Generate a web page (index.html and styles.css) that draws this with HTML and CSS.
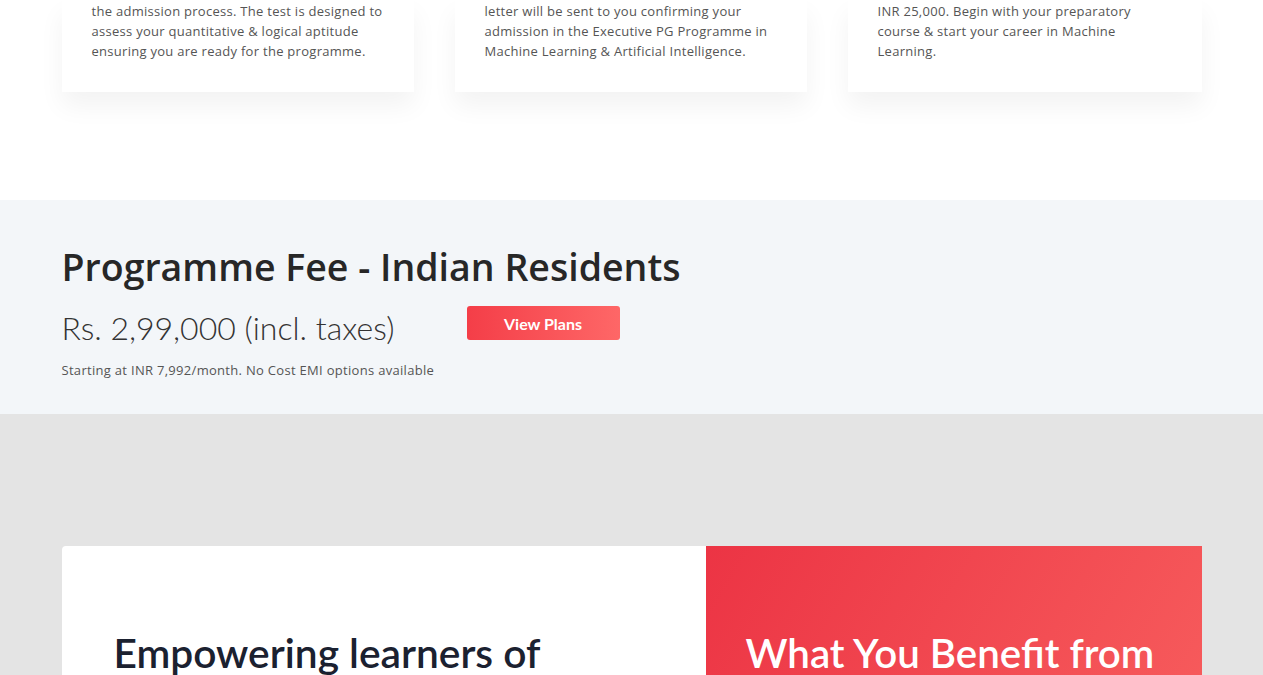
FILE: index.html
```html
<!DOCTYPE html>
<html lang="en">
<head>
<meta charset="utf-8">
<title>Programme Fee</title>
<link rel="stylesheet" href="styles.css">
</head>
<body>
<section class="steps">
  <div class="container steps-grid">
    <div class="step-card">
      <p>the admission process. The test is designed to assess your quantitative &amp; logical aptitude ensuring you are ready for the programme.</p>
    </div>
    <div class="step-card">
      <p>letter will be sent to you confirming your admission in the Executive PG Programme in Machine Learning &amp; Artificial Intelligence.</p>
    </div>
    <div class="step-card">
      <p>INR 25,000. Begin with your preparatory course &amp; start your career in Machine Learning.</p>
    </div>
  </div>
</section>

<section class="fee">
  <div class="container">
    <h2 class="fee-title">Programme Fee - Indian Residents</h2>
    <div class="fee-row">
      <div class="fee-info">
        <div class="fee-price">Rs. 2,99,000 (incl. taxes)</div>
        <div class="fee-note">Starting at INR 7,992/month. No Cost EMI options available</div>
      </div>
      <button class="btn-plans">View Plans</button>
    </div>
  </div>
</section>

<section class="benefits">
  <div class="container benefit-card">
    <div class="benefit-left">
      <h2>Empowering learners of</h2>
    </div>
    <div class="benefit-right">
      <h2>What You Benefit from</h2>
    </div>
  </div>
</section>
</body>
</html>
```

FILE: styles.css
```css
* { box-sizing: border-box; }
html, body { margin: 0; padding: 0; }
body {
  font-family: "Open Sans", "Liberation Sans", Arial, sans-serif;
  background: #ffffff;
  color: #333;
  overflow: hidden;
}
.container {
  width: 1140px;
  margin: 0 auto;
}

/* steps cards */
.steps {
  background: #fff;
  height: 200px;
}
.steps-grid {
  display: grid;
  grid-template-columns: 352px 352px 354px;
  column-gap: 41px;
}
.step-card {
  background: #fff;
  height: 92px;
  padding: 1px 30px 0 30px;
  box-shadow: 0 14px 24px rgba(0, 0, 0, 0.05);
}
.step-card p {
  margin: 0;
  max-width: 294px;
  font-size: 13px;
  letter-spacing: 0.28px;
  line-height: 20px;
  color: #555;
}

/* fee */
.fee {
  background: #f3f6f9;
  height: 214px;
  padding-top: 43px;
}
.fee-title {
  margin: 0;
  font-family: "Open Sans", sans-serif;
  font-weight: 600;
  font-size: 37.5px;
  line-height: 48px;
  color: #272727;
}
.fee-row {
  display: flex;
  align-items: flex-start;
  margin-top: 17px;
}
.fee-info {
  width: 405px;
}
.fee-price {
  font-family: "Lato", sans-serif;
  font-weight: 300;
  font-size: 32px;
  line-height: 40px;
  color: #333;
}
.fee-note {
  margin-top: 13px;
  font-size: 13px;
  letter-spacing: 0.3px;
  line-height: 18px;
  color: #555;
}
.btn-plans {
  width: 153px;
  height: 34px;
  margin-top: -2px;
  border: none;
  border-radius: 3px;
  background: linear-gradient(90deg, #f43e48 0%, #fe6767 100%);
  color: #fff;
  font-family: "Lato", sans-serif;
  font-weight: 700;
  font-size: 16px;
  padding: 0;
}

/* benefits */
.benefits {
  background: #e4e4e4;
  padding-top: 132px;
  height: 400px;
}
.benefit-card {
  display: grid;
  grid-template-columns: 644px 496px;
  height: 300px;
}
.benefit-left {
  background: #fff;
  border-radius: 4px 0 0 0;
  padding: 82px 0 0 52px;
}
.benefit-right {
  background: linear-gradient(120deg, #ec3444 0%, #f8605f 100%);
  padding: 82px 0 0 40px;
}
.benefit-left h2,
.benefit-right h2 {
  margin: 0;
  font-family: "Lato", sans-serif;
  font-weight: 600;
  font-size: 40.7px;
  line-height: 50px;
}
.benefit-left h2 { color: #1b2130; }
.benefit-right h2 { color: #fff; font-size: 40.3px; }
```
